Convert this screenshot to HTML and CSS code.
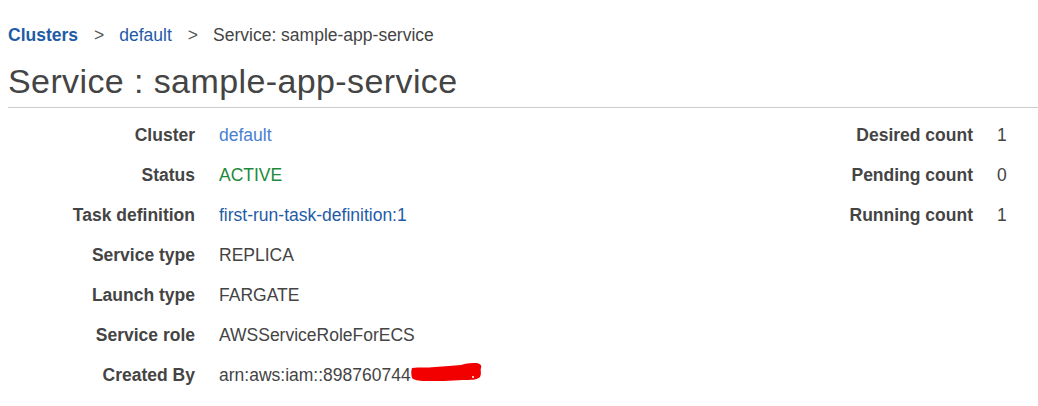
FILE: index.html
```html
<!DOCTYPE html>
<html>
<head>
<meta charset="utf-8">
<link rel="stylesheet" href="styles.css">
</head>
<body>
<nav class="crumbs">
  <a class="crumb crumb-strong" href="#">Clusters</a>
  <span class="sep">&gt;</span>
  <a class="crumb" href="#">default</a>
  <span class="sep">&gt;</span>
  <span class="crumb-current">Service: sample-app-service</span>
</nav>
<h1 class="title">Service : sample-app-service</h1>
<div class="details">
  <dl class="props props-left">
    <dt>Cluster</dt><dd><a class="link-light" href="#">default</a></dd>
    <dt>Status</dt><dd class="ok">ACTIVE</dd>
    <dt>Task definition</dt><dd><a class="link" href="#">first-run-task-definition:1</a></dd>
    <dt>Service type</dt><dd>REPLICA</dd>
    <dt>Launch type</dt><dd>FARGATE</dd>
    <dt>Service role</dt><dd>AWSServiceRoleForECS</dd>
    <dt>Created By</dt><dd class="arn">arn:aws:iam::898760744<span class="redact"><svg width="72" height="20" viewBox="0 0 72 20"><path d="M1 5 C8 4 16 5 24 4 C34 3 42 3 50 2 C56 0 62 0 66 0 C69 1 71 2 70 5 C69 8 71 10 69 14 C66 17 60 17 52 17 C40 18 26 18 14 18 C7 18 3 17 1 15 C0 11 0 8 1 5 Z" fill="#f20000"/><circle cx="62" cy="14" r="1" fill="#fff"/></svg></span></dd>
  </dl>
  <dl class="props props-right">
    <dt>Desired count</dt><dd>1</dd>
    <dt>Pending count</dt><dd>0</dd>
    <dt>Running count</dt><dd>1</dd>
  </dl>
</div>
</body>
</html>
```
FILE: styles.css
```css
body {
  margin: 0;
  padding: 0 0 0 8px;
  font-family: "Liberation Sans", Arial, sans-serif;
  color: #444;
  background: #fff;
}
a { text-decoration: none; }
.crumbs {
  display: flex;
  align-items: center;
  height: 22px;
  margin-top: 24px;
  font-size: 17.5px;
  line-height: 22px;
}
.crumb { color: #1f5ba6; }
.crumb-strong { font-weight: bold; }
.sep {
  color: #555;
  margin: 0 15px 0 16px;
}
.crumb-current { color: #444; }
.title {
  margin: 14px 0 0;
  font-size: 34px;
  letter-spacing: 0.4px;
  font-weight: normal;
  line-height: 42px;
  color: #444;
  padding-bottom: 5px;
  border-bottom: 1px solid #ccc;
}
.details {
  display: flex;
  justify-content: space-between;
  margin-top: 7px;
}
.props {
  display: grid;
  margin: 0;
  column-gap: 24px;
  font-size: 17.5px;
  grid-auto-rows: 40px;
  align-items: center;
}
.props-left { grid-template-columns: 187px auto; }
.props-right { grid-template-columns: auto 41px; }
.props dt {
  font-weight: bold;
  text-align: right;
  color: #444;
}
.props dd { margin: 0; color: #444; white-space: nowrap; }
.link { color: #1f5ba6; }
.link-light { color: #4a7fd0; }
.ok { color: #1d8a3a !important; }
.arn { position: relative; }
.redact {
  position: absolute;
  left: 192px;
  top: -2px;
}
```
